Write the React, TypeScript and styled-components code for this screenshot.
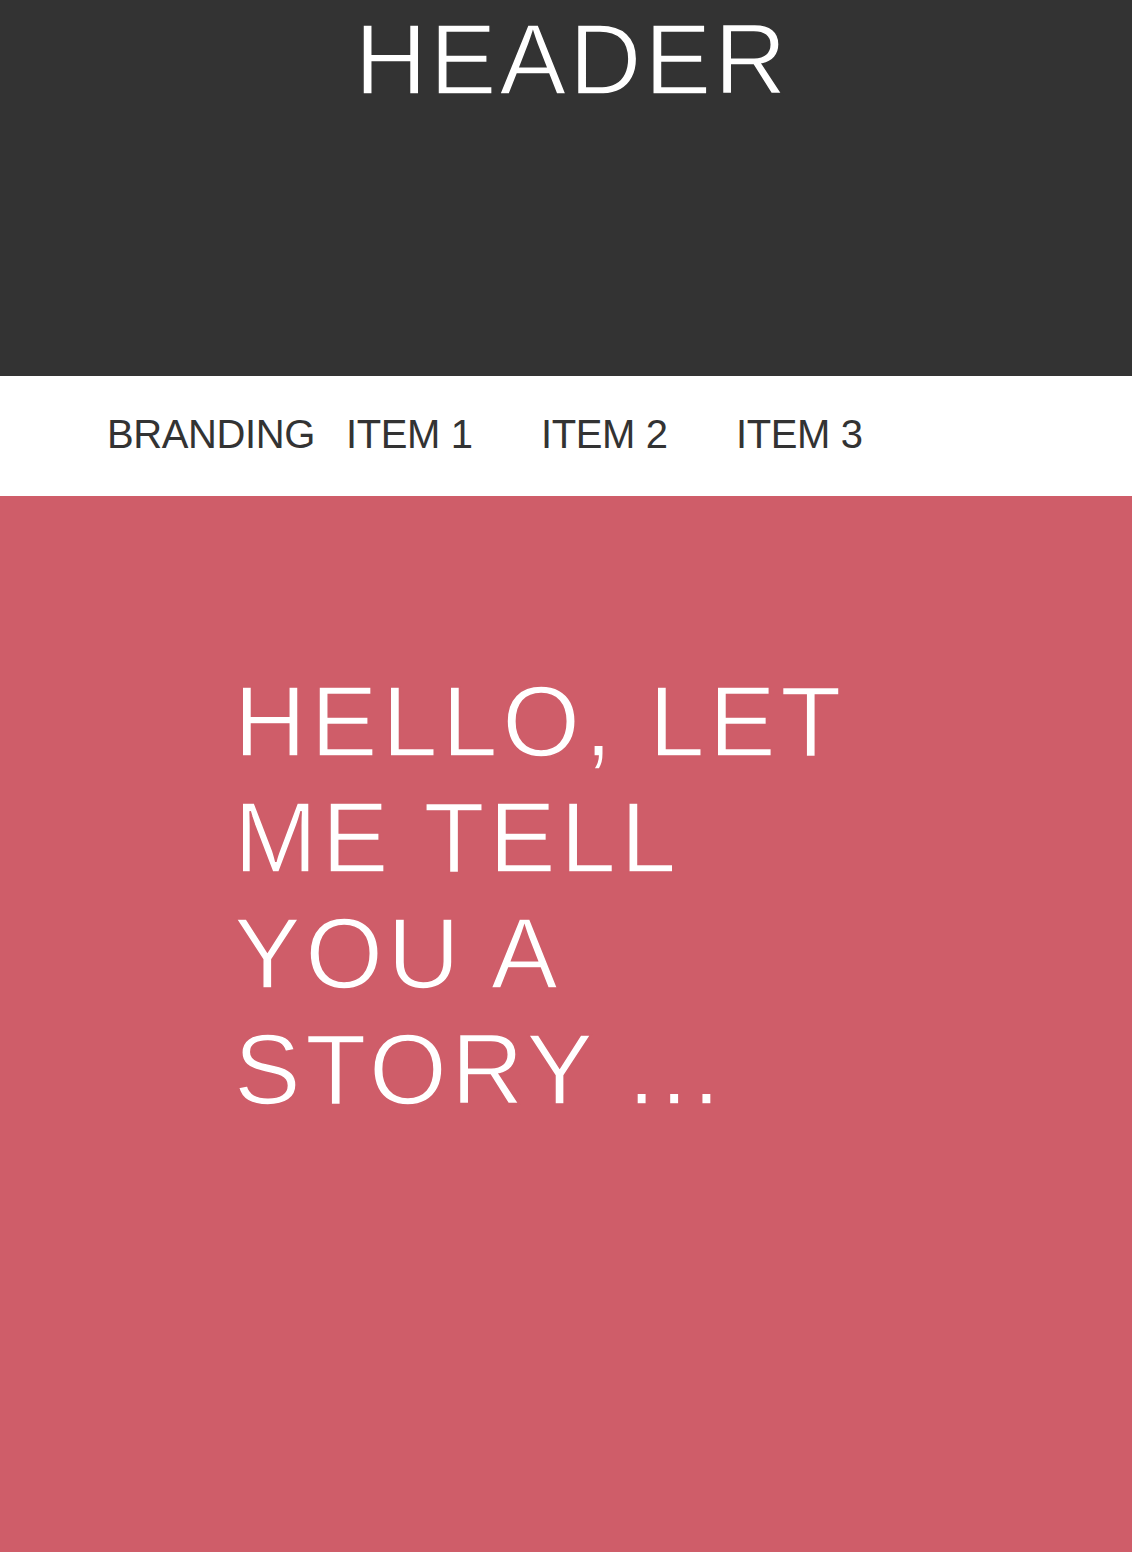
import React from "react";
import styled, { createGlobalStyle } from "styled-components";

const GlobalStyle = createGlobalStyle`
  html, body {
    margin: 0;
    padding: 0;
    background: #cf5d69;
  }
  body {
    font-family: "Liberation Sans", Arial, Helvetica, sans-serif;
  }
  * { box-sizing: border-box; }
`;

const Page = styled.div`
  display: flex;
  flex-direction: column;
  min-height: 1552px;
`;

const Header = styled.header`
  background: #333333;
  height: 376px;
  display: flex;
  justify-content: center;
  align-items: flex-start;
`;

const HeaderTitle = styled.h1`
  margin: 0 0 0 12px;
  padding-top: 1px;
  color: #ffffff;
  font-size: 100px;
  font-weight: 400;
  line-height: 116px;
  letter-spacing: 3px;
  text-transform: uppercase;
  -webkit-text-stroke: 1.6px #333333;
`;

const Nav = styled.nav`
  background: #ffffff;
  height: 120px;
  padding: 38px 0 0 107px;
  display: flex;
  align-items: flex-start;
`;

const Brand = styled.div`
  width: 239px;
  color: #333333;
  font-size: 40px;
  line-height: 40px;
  letter-spacing: -0.4px;
`;

const NavList = styled.ul`
  list-style: none;
  margin: 0;
  padding: 0;
  display: flex;
`;

const NavItem = styled.li`
  width: 195px;
  color: #333333;
  font-size: 40px;
  line-height: 40px;
  letter-spacing: -0.4px;
`;

const Hero = styled.section`
  flex: 1;
  background: #cf5d69;
  padding-top: 167px;
  display: flex;
  justify-content: center;
`;

const HeroText = styled.h2`
  margin: 0;
  width: 664px;
  color: #ffffff;
  font-size: 100px;
  font-weight: 400;
  line-height: 116px;
  letter-spacing: 4.5px;
  text-transform: uppercase;
  -webkit-text-stroke: 1.6px #cf5d69;
`;

export default function App() {
  return (
    <>
      <GlobalStyle />
      <Page>
        <Header>
          <HeaderTitle>Header</HeaderTitle>
        </Header>
        <Nav>
          <Brand>BRANDING</Brand>
          <NavList>
            <NavItem>ITEM 1</NavItem>
            <NavItem>ITEM 2</NavItem>
            <NavItem>ITEM 3</NavItem>
          </NavList>
        </Nav>
        <Hero>
          <HeroText>Hello, let me tell you a story ...</HeroText>
        </Hero>
      </Page>
    </>
  );
}
